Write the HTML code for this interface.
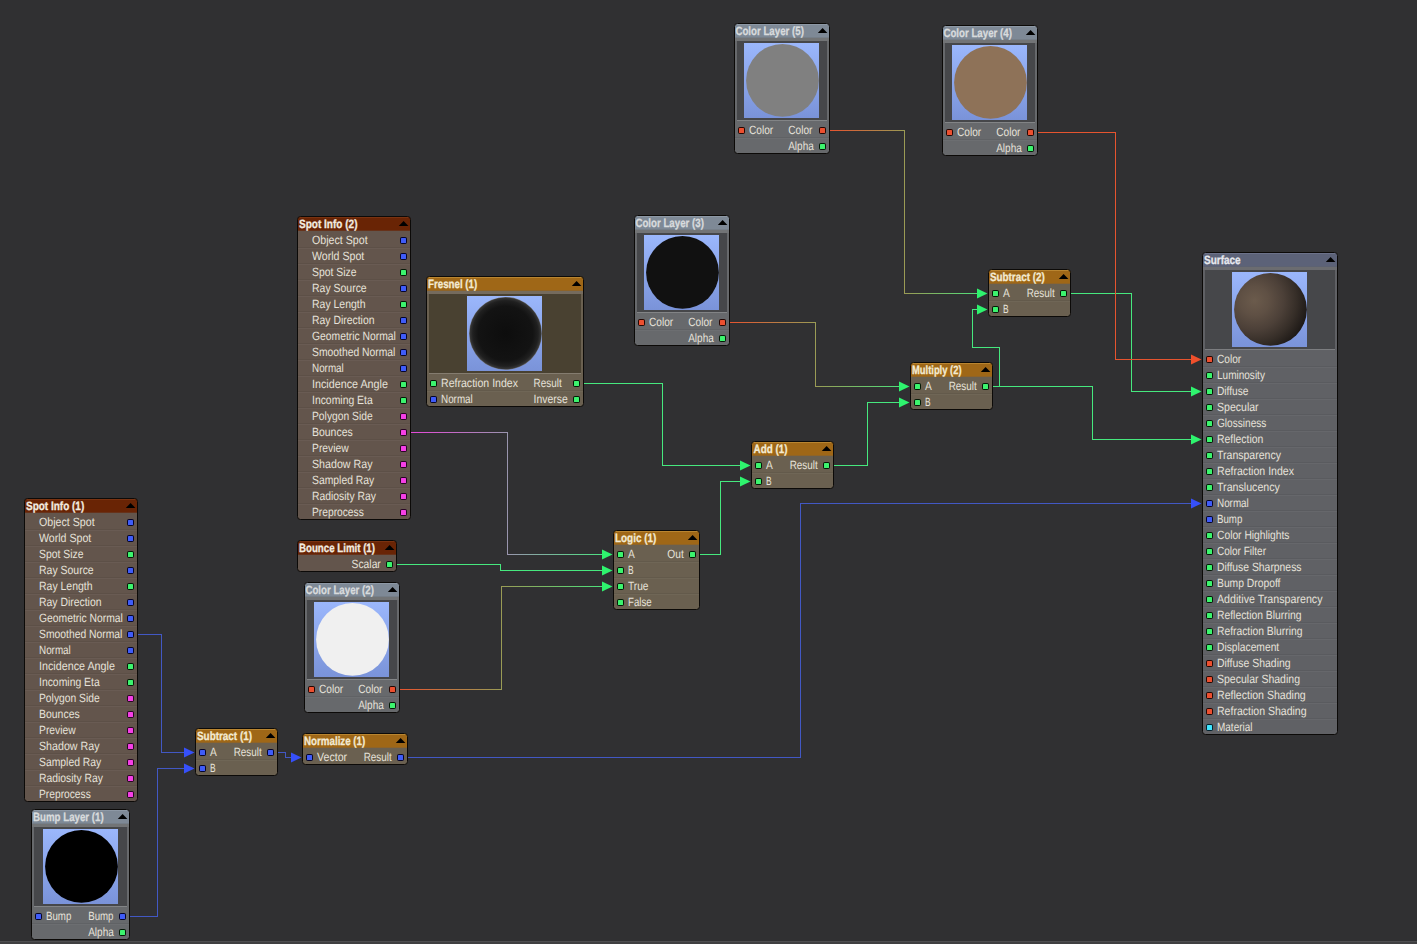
<!DOCTYPE html>
<html lang="en"><head><meta charset="utf-8"><title>Node Editor</title>
<style>
html,body{margin:0;padding:0;background:#303032;overflow:hidden}
body{width:1417px;height:944px;font-family:"Liberation Sans",sans-serif}
svg{display:block}
</style></head><body>
<svg width="1417" height="944" viewBox="0 0 1417 944" font-family="'Liberation Sans', sans-serif" text-rendering="geometricPrecision">
<defs>
<linearGradient id="sky" x1="0" y1="0" x2="0" y2="1"><stop offset="0" stop-color="#9bb7fc"/><stop offset="1" stop-color="#7a93d9"/></linearGradient>
<radialGradient id="gfres" cx="0.5" cy="0.5" r="0.5"><stop offset="0" stop-color="#0d0d0d"/><stop offset="0.75" stop-color="#131313"/><stop offset="0.9" stop-color="#202020"/><stop offset="0.97" stop-color="#343434"/><stop offset="1" stop-color="#686868"/></radialGradient>
<radialGradient id="gsurf" cx="0.28" cy="0.38" r="0.80"><stop offset="0" stop-color="#6b5b4c"/><stop offset="0.25" stop-color="#5f5044"/><stop offset="0.5" stop-color="#4c4038"/><stop offset="0.72" stop-color="#362e28"/><stop offset="0.9" stop-color="#211c19"/><stop offset="1" stop-color="#131110"/></radialGradient>
<linearGradient id="w4" gradientUnits="userSpaceOnUse" x1="411" y1="0" x2="612" y2="0"><stop offset="0" stop-color="#e648da"/><stop offset="1" stop-color="#46e87e"/></linearGradient><linearGradient id="w6" gradientUnits="userSpaceOnUse" x1="400" y1="0" x2="612" y2="0"><stop offset="0" stop-color="#e6542f"/><stop offset="1" stop-color="#46e87e"/></linearGradient><linearGradient id="w10" gradientUnits="userSpaceOnUse" x1="730" y1="0" x2="909" y2="0"><stop offset="0" stop-color="#e6542f"/><stop offset="1" stop-color="#46e87e"/></linearGradient><linearGradient id="w13" gradientUnits="userSpaceOnUse" x1="830" y1="0" x2="987" y2="0"><stop offset="0" stop-color="#e6542f"/><stop offset="1" stop-color="#46e87e"/></linearGradient><clipPath id="cp-spot1"><rect x="24.5" y="498.5" width="113" height="303" rx="3"/></clipPath><clipPath id="cp-spot2"><rect x="297.5" y="216.5" width="113" height="303" rx="3"/></clipPath><clipPath id="cp-bump"><rect x="31.5" y="809.5" width="98" height="130" rx="3"/></clipPath><clipPath id="cp-sub1"><rect x="195.5" y="728.5" width="82" height="47" rx="3"/></clipPath><clipPath id="cp-norm"><rect x="302.5" y="733.5" width="105" height="31" rx="3"/></clipPath><clipPath id="cp-bounce"><rect x="297.5" y="540.5" width="99" height="31" rx="3"/></clipPath><clipPath id="cp-cl2"><rect x="304.5" y="582.5" width="95" height="130" rx="3"/></clipPath><clipPath id="cp-fresnel"><rect x="426.5" y="276.5" width="157" height="130" rx="3"/></clipPath><clipPath id="cp-logic"><rect x="613.5" y="530.5" width="86" height="79" rx="3"/></clipPath><clipPath id="cp-add"><rect x="751.5" y="441.5" width="82" height="47" rx="3"/></clipPath><clipPath id="cp-cl3"><rect x="634.5" y="215.5" width="95" height="130" rx="3"/></clipPath><clipPath id="cp-cl5"><rect x="734.5" y="23.5" width="95" height="130" rx="3"/></clipPath><clipPath id="cp-cl4"><rect x="942.5" y="25.5" width="95" height="130" rx="3"/></clipPath><clipPath id="cp-mult"><rect x="910.5" y="362.5" width="82" height="47" rx="3"/></clipPath><clipPath id="cp-sub2"><rect x="988.5" y="269.5" width="82" height="47" rx="3"/></clipPath><clipPath id="cp-surface"><rect x="1202.5" y="252.5" width="135" height="482" rx="3"/></clipPath>
</defs>
<rect width="1417" height="944" fill="#303032"/>
<rect x="0" y="941" width="1417" height="1" fill="#4e4e50"/>
<rect x="0" y="942" width="1417" height="2" fill="#3f3f41"/>
<path d="M138 634.5L161.5 634.5L161.5 752.5L185 752.5" fill="none" stroke="#4258c4" stroke-width="1" shape-rendering="crispEdges"/>
<path d="M194.5 752.5L184 747.5L184 757.5Z" fill="#3650fa"/>
<path d="M130 916.5L157.5 916.5L157.5 768.5L185 768.5" fill="none" stroke="#4258c4" stroke-width="1" shape-rendering="crispEdges"/>
<path d="M194.5 768.5L184 763.5L184 773.5Z" fill="#3650fa"/>
<path d="M278 752.5L285.5 752.5L285.5 757.5L292 757.5" fill="none" stroke="#4258c4" stroke-width="1" shape-rendering="crispEdges"/>
<path d="M301.5 757.5L291 752.5L291 762.5Z" fill="#3650fa"/>
<path d="M408 757.5L800.5 757.5L800.5 503.5L1192 503.5" fill="none" stroke="#4258c4" stroke-width="1" shape-rendering="crispEdges"/>
<path d="M1201.5 503.5L1191 498.5L1191 508.5Z" fill="#3650fa"/>
<path d="M411 432.5L507.5 432.5L507.5 554.5L603 554.5" fill="none" stroke="url(#w4)" stroke-width="1" shape-rendering="crispEdges"/>
<path d="M612.5 554.5L602 549.5L602 559.5Z" fill="#2ef46e"/>
<path d="M397 564.5L500.5 564.5L500.5 570.5L603 570.5" fill="none" stroke="#46e87e" stroke-width="1" shape-rendering="crispEdges"/>
<path d="M612.5 570.5L602 565.5L602 575.5Z" fill="#2ef46e"/>
<path d="M400 689.5L501.5 689.5L501.5 586.5L603 586.5" fill="none" stroke="url(#w6)" stroke-width="1" shape-rendering="crispEdges"/>
<path d="M612.5 586.5L602 581.5L602 591.5Z" fill="#2ef46e"/>
<path d="M584 383.5L662.5 383.5L662.5 465.5L741 465.5" fill="none" stroke="#46e87e" stroke-width="1" shape-rendering="crispEdges"/>
<path d="M750.5 465.5L740 460.5L740 470.5Z" fill="#2ef46e"/>
<path d="M700 554.5L720.5 554.5L720.5 481.5L741 481.5" fill="none" stroke="#46e87e" stroke-width="1" shape-rendering="crispEdges"/>
<path d="M750.5 481.5L740 476.5L740 486.5Z" fill="#2ef46e"/>
<path d="M834 465.5L867.5 465.5L867.5 402.5L900 402.5" fill="none" stroke="#46e87e" stroke-width="1" shape-rendering="crispEdges"/>
<path d="M909.5 402.5L899 397.5L899 407.5Z" fill="#2ef46e"/>
<path d="M730 322.5L815.5 322.5L815.5 386.5L900 386.5" fill="none" stroke="url(#w10)" stroke-width="1" shape-rendering="crispEdges"/>
<path d="M909.5 386.5L899 381.5L899 391.5Z" fill="#2ef46e"/>
<path d="M993 386.5L1092.5 386.5L1092.5 439.5L1192 439.5" fill="none" stroke="#46e87e" stroke-width="1" shape-rendering="crispEdges"/>
<path d="M1201.5 439.5L1191 434.5L1191 444.5Z" fill="#2ef46e"/>
<path d="M993 386.5L999.5 386.5L999.5 347.5L972.5 347.5L972.5 309.5L978 309.5" fill="none" stroke="#46e87e" stroke-width="1" shape-rendering="crispEdges"/>
<path d="M987.5 309.5L977 304.5L977 314.5Z" fill="#2ef46e"/>
<path d="M830 130.5L904.5 130.5L904.5 293.5L978 293.5" fill="none" stroke="url(#w13)" stroke-width="1" shape-rendering="crispEdges"/>
<path d="M987.5 293.5L977 288.5L977 298.5Z" fill="#2ef46e"/>
<path d="M1071 293.5L1131.5 293.5L1131.5 391.5L1192 391.5" fill="none" stroke="#46e87e" stroke-width="1" shape-rendering="crispEdges"/>
<path d="M1201.5 391.5L1191 386.5L1191 396.5Z" fill="#2ef46e"/>
<path d="M1038 132.5L1115.5 132.5L1115.5 359.5L1192 359.5" fill="none" stroke="#e6542f" stroke-width="1" shape-rendering="crispEdges"/>
<path d="M1201.5 359.5L1191 354.5L1191 364.5Z" fill="#f0502c"/>
<g id="spot1">
<g clip-path="url(#cp-spot1)">
<rect x="24" y="498" width="114" height="304" fill="#63554c"/>
<rect x="24" y="498" width="114" height="14" fill="#692405"/>
<rect x="24" y="499" width="114" height="1" fill="#7a3210"/>
<rect x="24" y="512" width="114" height="1" fill="#692405" fill-opacity="0.7"/>
<rect x="24" y="529" width="114" height="1" fill="#000" fill-opacity="0.06"/>
<rect x="24" y="530" width="114" height="1" fill="#fff" fill-opacity="0.04"/>
<rect x="24" y="545" width="114" height="1" fill="#000" fill-opacity="0.06"/>
<rect x="24" y="546" width="114" height="1" fill="#fff" fill-opacity="0.04"/>
<rect x="24" y="561" width="114" height="1" fill="#000" fill-opacity="0.06"/>
<rect x="24" y="562" width="114" height="1" fill="#fff" fill-opacity="0.04"/>
<rect x="24" y="577" width="114" height="1" fill="#000" fill-opacity="0.06"/>
<rect x="24" y="578" width="114" height="1" fill="#fff" fill-opacity="0.04"/>
<rect x="24" y="593" width="114" height="1" fill="#000" fill-opacity="0.06"/>
<rect x="24" y="594" width="114" height="1" fill="#fff" fill-opacity="0.04"/>
<rect x="24" y="609" width="114" height="1" fill="#000" fill-opacity="0.06"/>
<rect x="24" y="610" width="114" height="1" fill="#fff" fill-opacity="0.04"/>
<rect x="24" y="625" width="114" height="1" fill="#000" fill-opacity="0.06"/>
<rect x="24" y="626" width="114" height="1" fill="#fff" fill-opacity="0.04"/>
<rect x="24" y="641" width="114" height="1" fill="#000" fill-opacity="0.06"/>
<rect x="24" y="642" width="114" height="1" fill="#fff" fill-opacity="0.04"/>
<rect x="24" y="657" width="114" height="1" fill="#000" fill-opacity="0.06"/>
<rect x="24" y="658" width="114" height="1" fill="#fff" fill-opacity="0.04"/>
<rect x="24" y="673" width="114" height="1" fill="#000" fill-opacity="0.06"/>
<rect x="24" y="674" width="114" height="1" fill="#fff" fill-opacity="0.04"/>
<rect x="24" y="689" width="114" height="1" fill="#000" fill-opacity="0.06"/>
<rect x="24" y="690" width="114" height="1" fill="#fff" fill-opacity="0.04"/>
<rect x="24" y="705" width="114" height="1" fill="#000" fill-opacity="0.06"/>
<rect x="24" y="706" width="114" height="1" fill="#fff" fill-opacity="0.04"/>
<rect x="24" y="721" width="114" height="1" fill="#000" fill-opacity="0.06"/>
<rect x="24" y="722" width="114" height="1" fill="#fff" fill-opacity="0.04"/>
<rect x="24" y="737" width="114" height="1" fill="#000" fill-opacity="0.06"/>
<rect x="24" y="738" width="114" height="1" fill="#fff" fill-opacity="0.04"/>
<rect x="24" y="753" width="114" height="1" fill="#000" fill-opacity="0.06"/>
<rect x="24" y="754" width="114" height="1" fill="#fff" fill-opacity="0.04"/>
<rect x="24" y="769" width="114" height="1" fill="#000" fill-opacity="0.06"/>
<rect x="24" y="770" width="114" height="1" fill="#fff" fill-opacity="0.04"/>
<rect x="24" y="785" width="114" height="1" fill="#000" fill-opacity="0.06"/>
<rect x="24" y="786" width="114" height="1" fill="#fff" fill-opacity="0.04"/>
</g>
<rect x="24.5" y="498.5" width="113" height="303" rx="3" fill="none" stroke="#0c0a08"/>
<text x="26.0" y="509.9" font-size="12" font-weight="bold" stroke="#f3ece0" stroke-width="0.3" fill="#f3ece0" textLength="58.2" lengthAdjust="spacingAndGlyphs">Spot Info (1)</text>
<path d="M125.8 508L130.6 502.9L135.4 508Z" fill="#000"/>
<text x="39.0" y="525.7" font-size="12" fill="#e6e2da" textLength="55.6" lengthAdjust="spacingAndGlyphs">Object Spot</text>
<rect x="127" y="519" width="7" height="7" rx="2" fill="#04042c"/><rect x="128" y="520" width="5" height="5" rx="0.6" fill="#3f5cf8"/>
<text x="39.0" y="541.7" font-size="12" fill="#e6e2da" textLength="52.3" lengthAdjust="spacingAndGlyphs">World Spot</text>
<rect x="127" y="535" width="7" height="7" rx="2" fill="#04042c"/><rect x="128" y="536" width="5" height="5" rx="0.6" fill="#3f5cf8"/>
<text x="39.0" y="557.7" font-size="12" fill="#e6e2da" textLength="44.5" lengthAdjust="spacingAndGlyphs">Spot Size</text>
<rect x="127" y="551" width="7" height="7" rx="2" fill="#031a06"/><rect x="128" y="552" width="5" height="5" rx="0.6" fill="#3cf46e"/>
<text x="39.0" y="573.7" font-size="12" fill="#e6e2da" textLength="54.7" lengthAdjust="spacingAndGlyphs">Ray Source</text>
<rect x="127" y="567" width="7" height="7" rx="2" fill="#04042c"/><rect x="128" y="568" width="5" height="5" rx="0.6" fill="#3f5cf8"/>
<text x="39.0" y="589.7" font-size="12" fill="#e6e2da" textLength="53.6" lengthAdjust="spacingAndGlyphs">Ray Length</text>
<rect x="127" y="583" width="7" height="7" rx="2" fill="#031a06"/><rect x="128" y="584" width="5" height="5" rx="0.6" fill="#3cf46e"/>
<text x="39.0" y="605.7" font-size="12" fill="#e6e2da" textLength="62.5" lengthAdjust="spacingAndGlyphs">Ray Direction</text>
<rect x="127" y="599" width="7" height="7" rx="2" fill="#04042c"/><rect x="128" y="600" width="5" height="5" rx="0.6" fill="#3f5cf8"/>
<text x="39.0" y="621.7" font-size="12" fill="#e6e2da" textLength="83.9" lengthAdjust="spacingAndGlyphs">Geometric Normal</text>
<rect x="127" y="615" width="7" height="7" rx="2" fill="#04042c"/><rect x="128" y="616" width="5" height="5" rx="0.6" fill="#3f5cf8"/>
<text x="39.0" y="637.7" font-size="12" fill="#e6e2da" textLength="83.4" lengthAdjust="spacingAndGlyphs">Smoothed Normal</text>
<rect x="127" y="631" width="7" height="7" rx="2" fill="#04042c"/><rect x="128" y="632" width="5" height="5" rx="0.6" fill="#3f5cf8"/>
<text x="39.0" y="653.7" font-size="12" fill="#e6e2da" textLength="31.8" lengthAdjust="spacingAndGlyphs">Normal</text>
<rect x="127" y="647" width="7" height="7" rx="2" fill="#04042c"/><rect x="128" y="648" width="5" height="5" rx="0.6" fill="#3f5cf8"/>
<text x="39.0" y="669.7" font-size="12" fill="#e6e2da" textLength="75.9" lengthAdjust="spacingAndGlyphs">Incidence Angle</text>
<rect x="127" y="663" width="7" height="7" rx="2" fill="#031a06"/><rect x="128" y="664" width="5" height="5" rx="0.6" fill="#3cf46e"/>
<text x="39.0" y="685.7" font-size="12" fill="#e6e2da" textLength="60.7" lengthAdjust="spacingAndGlyphs">Incoming Eta</text>
<rect x="127" y="679" width="7" height="7" rx="2" fill="#031a06"/><rect x="128" y="680" width="5" height="5" rx="0.6" fill="#3cf46e"/>
<text x="39.0" y="701.7" font-size="12" fill="#e6e2da" textLength="60.7" lengthAdjust="spacingAndGlyphs">Polygon Side</text>
<rect x="127" y="695" width="7" height="7" rx="2" fill="#2a0426"/><rect x="128" y="696" width="5" height="5" rx="0.6" fill="#f63fe6"/>
<text x="39.0" y="717.7" font-size="12" fill="#e6e2da" textLength="40.7" lengthAdjust="spacingAndGlyphs">Bounces</text>
<rect x="127" y="711" width="7" height="7" rx="2" fill="#2a0426"/><rect x="128" y="712" width="5" height="5" rx="0.6" fill="#f63fe6"/>
<text x="39.0" y="733.7" font-size="12" fill="#e6e2da" textLength="36.7" lengthAdjust="spacingAndGlyphs">Preview</text>
<rect x="127" y="727" width="7" height="7" rx="2" fill="#2a0426"/><rect x="128" y="728" width="5" height="5" rx="0.6" fill="#f63fe6"/>
<text x="39.0" y="749.7" font-size="12" fill="#e6e2da" textLength="60.5" lengthAdjust="spacingAndGlyphs">Shadow Ray</text>
<rect x="127" y="743" width="7" height="7" rx="2" fill="#2a0426"/><rect x="128" y="744" width="5" height="5" rx="0.6" fill="#f63fe6"/>
<text x="39.0" y="765.7" font-size="12" fill="#e6e2da" textLength="62.3" lengthAdjust="spacingAndGlyphs">Sampled Ray</text>
<rect x="127" y="759" width="7" height="7" rx="2" fill="#2a0426"/><rect x="128" y="760" width="5" height="5" rx="0.6" fill="#f63fe6"/>
<text x="39.0" y="781.7" font-size="12" fill="#e6e2da" textLength="64.0" lengthAdjust="spacingAndGlyphs">Radiosity Ray</text>
<rect x="127" y="775" width="7" height="7" rx="2" fill="#2a0426"/><rect x="128" y="776" width="5" height="5" rx="0.6" fill="#f63fe6"/>
<text x="39.0" y="797.7" font-size="12" fill="#e6e2da" textLength="51.8" lengthAdjust="spacingAndGlyphs">Preprocess</text>
<rect x="127" y="791" width="7" height="7" rx="2" fill="#2a0426"/><rect x="128" y="792" width="5" height="5" rx="0.6" fill="#f63fe6"/>
</g>
<g id="spot2">
<g clip-path="url(#cp-spot2)">
<rect x="297" y="216" width="114" height="304" fill="#63554c"/>
<rect x="297" y="216" width="114" height="14" fill="#692405"/>
<rect x="297" y="217" width="114" height="1" fill="#7a3210"/>
<rect x="297" y="230" width="114" height="1" fill="#692405" fill-opacity="0.7"/>
<rect x="297" y="247" width="114" height="1" fill="#000" fill-opacity="0.06"/>
<rect x="297" y="248" width="114" height="1" fill="#fff" fill-opacity="0.04"/>
<rect x="297" y="263" width="114" height="1" fill="#000" fill-opacity="0.06"/>
<rect x="297" y="264" width="114" height="1" fill="#fff" fill-opacity="0.04"/>
<rect x="297" y="279" width="114" height="1" fill="#000" fill-opacity="0.06"/>
<rect x="297" y="280" width="114" height="1" fill="#fff" fill-opacity="0.04"/>
<rect x="297" y="295" width="114" height="1" fill="#000" fill-opacity="0.06"/>
<rect x="297" y="296" width="114" height="1" fill="#fff" fill-opacity="0.04"/>
<rect x="297" y="311" width="114" height="1" fill="#000" fill-opacity="0.06"/>
<rect x="297" y="312" width="114" height="1" fill="#fff" fill-opacity="0.04"/>
<rect x="297" y="327" width="114" height="1" fill="#000" fill-opacity="0.06"/>
<rect x="297" y="328" width="114" height="1" fill="#fff" fill-opacity="0.04"/>
<rect x="297" y="343" width="114" height="1" fill="#000" fill-opacity="0.06"/>
<rect x="297" y="344" width="114" height="1" fill="#fff" fill-opacity="0.04"/>
<rect x="297" y="359" width="114" height="1" fill="#000" fill-opacity="0.06"/>
<rect x="297" y="360" width="114" height="1" fill="#fff" fill-opacity="0.04"/>
<rect x="297" y="375" width="114" height="1" fill="#000" fill-opacity="0.06"/>
<rect x="297" y="376" width="114" height="1" fill="#fff" fill-opacity="0.04"/>
<rect x="297" y="391" width="114" height="1" fill="#000" fill-opacity="0.06"/>
<rect x="297" y="392" width="114" height="1" fill="#fff" fill-opacity="0.04"/>
<rect x="297" y="407" width="114" height="1" fill="#000" fill-opacity="0.06"/>
<rect x="297" y="408" width="114" height="1" fill="#fff" fill-opacity="0.04"/>
<rect x="297" y="423" width="114" height="1" fill="#000" fill-opacity="0.06"/>
<rect x="297" y="424" width="114" height="1" fill="#fff" fill-opacity="0.04"/>
<rect x="297" y="439" width="114" height="1" fill="#000" fill-opacity="0.06"/>
<rect x="297" y="440" width="114" height="1" fill="#fff" fill-opacity="0.04"/>
<rect x="297" y="455" width="114" height="1" fill="#000" fill-opacity="0.06"/>
<rect x="297" y="456" width="114" height="1" fill="#fff" fill-opacity="0.04"/>
<rect x="297" y="471" width="114" height="1" fill="#000" fill-opacity="0.06"/>
<rect x="297" y="472" width="114" height="1" fill="#fff" fill-opacity="0.04"/>
<rect x="297" y="487" width="114" height="1" fill="#000" fill-opacity="0.06"/>
<rect x="297" y="488" width="114" height="1" fill="#fff" fill-opacity="0.04"/>
<rect x="297" y="503" width="114" height="1" fill="#000" fill-opacity="0.06"/>
<rect x="297" y="504" width="114" height="1" fill="#fff" fill-opacity="0.04"/>
</g>
<rect x="297.5" y="216.5" width="113" height="303" rx="3" fill="none" stroke="#0c0a08"/>
<text x="299.0" y="227.9" font-size="12" font-weight="bold" stroke="#f3ece0" stroke-width="0.3" fill="#f3ece0" textLength="58.5" lengthAdjust="spacingAndGlyphs">Spot Info (2)</text>
<path d="M398.8 226L403.6 220.9L408.4 226Z" fill="#000"/>
<text x="312.0" y="243.7" font-size="12" fill="#e6e2da" textLength="55.6" lengthAdjust="spacingAndGlyphs">Object Spot</text>
<rect x="400" y="237" width="7" height="7" rx="2" fill="#04042c"/><rect x="401" y="238" width="5" height="5" rx="0.6" fill="#3f5cf8"/>
<text x="312.0" y="259.7" font-size="12" fill="#e6e2da" textLength="52.3" lengthAdjust="spacingAndGlyphs">World Spot</text>
<rect x="400" y="253" width="7" height="7" rx="2" fill="#04042c"/><rect x="401" y="254" width="5" height="5" rx="0.6" fill="#3f5cf8"/>
<text x="312.0" y="275.7" font-size="12" fill="#e6e2da" textLength="44.5" lengthAdjust="spacingAndGlyphs">Spot Size</text>
<rect x="400" y="269" width="7" height="7" rx="2" fill="#031a06"/><rect x="401" y="270" width="5" height="5" rx="0.6" fill="#3cf46e"/>
<text x="312.0" y="291.7" font-size="12" fill="#e6e2da" textLength="54.7" lengthAdjust="spacingAndGlyphs">Ray Source</text>
<rect x="400" y="285" width="7" height="7" rx="2" fill="#04042c"/><rect x="401" y="286" width="5" height="5" rx="0.6" fill="#3f5cf8"/>
<text x="312.0" y="307.7" font-size="12" fill="#e6e2da" textLength="53.6" lengthAdjust="spacingAndGlyphs">Ray Length</text>
<rect x="400" y="301" width="7" height="7" rx="2" fill="#031a06"/><rect x="401" y="302" width="5" height="5" rx="0.6" fill="#3cf46e"/>
<text x="312.0" y="323.7" font-size="12" fill="#e6e2da" textLength="62.5" lengthAdjust="spacingAndGlyphs">Ray Direction</text>
<rect x="400" y="317" width="7" height="7" rx="2" fill="#04042c"/><rect x="401" y="318" width="5" height="5" rx="0.6" fill="#3f5cf8"/>
<text x="312.0" y="339.7" font-size="12" fill="#e6e2da" textLength="83.9" lengthAdjust="spacingAndGlyphs">Geometric Normal</text>
<rect x="400" y="333" width="7" height="7" rx="2" fill="#04042c"/><rect x="401" y="334" width="5" height="5" rx="0.6" fill="#3f5cf8"/>
<text x="312.0" y="355.7" font-size="12" fill="#e6e2da" textLength="83.4" lengthAdjust="spacingAndGlyphs">Smoothed Normal</text>
<rect x="400" y="349" width="7" height="7" rx="2" fill="#04042c"/><rect x="401" y="350" width="5" height="5" rx="0.6" fill="#3f5cf8"/>
<text x="312.0" y="371.7" font-size="12" fill="#e6e2da" textLength="31.8" lengthAdjust="spacingAndGlyphs">Normal</text>
<rect x="400" y="365" width="7" height="7" rx="2" fill="#04042c"/><rect x="401" y="366" width="5" height="5" rx="0.6" fill="#3f5cf8"/>
<text x="312.0" y="387.7" font-size="12" fill="#e6e2da" textLength="75.9" lengthAdjust="spacingAndGlyphs">Incidence Angle</text>
<rect x="400" y="381" width="7" height="7" rx="2" fill="#031a06"/><rect x="401" y="382" width="5" height="5" rx="0.6" fill="#3cf46e"/>
<text x="312.0" y="403.7" font-size="12" fill="#e6e2da" textLength="60.7" lengthAdjust="spacingAndGlyphs">Incoming Eta</text>
<rect x="400" y="397" width="7" height="7" rx="2" fill="#031a06"/><rect x="401" y="398" width="5" height="5" rx="0.6" fill="#3cf46e"/>
<text x="312.0" y="419.7" font-size="12" fill="#e6e2da" textLength="60.7" lengthAdjust="spacingAndGlyphs">Polygon Side</text>
<rect x="400" y="413" width="7" height="7" rx="2" fill="#2a0426"/><rect x="401" y="414" width="5" height="5" rx="0.6" fill="#f63fe6"/>
<text x="312.0" y="435.7" font-size="12" fill="#e6e2da" textLength="40.7" lengthAdjust="spacingAndGlyphs">Bounces</text>
<rect x="400" y="429" width="7" height="7" rx="2" fill="#2a0426"/><rect x="401" y="430" width="5" height="5" rx="0.6" fill="#f63fe6"/>
<text x="312.0" y="451.7" font-size="12" fill="#e6e2da" textLength="36.7" lengthAdjust="spacingAndGlyphs">Preview</text>
<rect x="400" y="445" width="7" height="7" rx="2" fill="#2a0426"/><rect x="401" y="446" width="5" height="5" rx="0.6" fill="#f63fe6"/>
<text x="312.0" y="467.7" font-size="12" fill="#e6e2da" textLength="60.5" lengthAdjust="spacingAndGlyphs">Shadow Ray</text>
<rect x="400" y="461" width="7" height="7" rx="2" fill="#2a0426"/><rect x="401" y="462" width="5" height="5" rx="0.6" fill="#f63fe6"/>
<text x="312.0" y="483.7" font-size="12" fill="#e6e2da" textLength="62.3" lengthAdjust="spacingAndGlyphs">Sampled Ray</text>
<rect x="400" y="477" width="7" height="7" rx="2" fill="#2a0426"/><rect x="401" y="478" width="5" height="5" rx="0.6" fill="#f63fe6"/>
<text x="312.0" y="499.7" font-size="12" fill="#e6e2da" textLength="64.0" lengthAdjust="spacingAndGlyphs">Radiosity Ray</text>
<rect x="400" y="493" width="7" height="7" rx="2" fill="#2a0426"/><rect x="401" y="494" width="5" height="5" rx="0.6" fill="#f63fe6"/>
<text x="312.0" y="515.7" font-size="12" fill="#e6e2da" textLength="51.8" lengthAdjust="spacingAndGlyphs">Preprocess</text>
<rect x="400" y="509" width="7" height="7" rx="2" fill="#2a0426"/><rect x="401" y="510" width="5" height="5" rx="0.6" fill="#f63fe6"/>
</g>
<g id="bump">
<g clip-path="url(#cp-bump)">
<rect x="31" y="809" width="99" height="131" fill="#67696c"/>
<rect x="31" y="809" width="99" height="14" fill="#7e8996"/>
<rect x="31" y="810" width="99" height="1" fill="#8d98a5"/>
<rect x="31" y="823" width="99" height="1" fill="#7e8996" fill-opacity="0.7"/>
<rect x="34" y="827" width="93" height="79" fill="#46474a"/>
<rect x="31" y="824" width="99" height="3" fill="#fff" fill-opacity="0.075"/>
<rect x="34" y="906" width="93" height="1" fill="#fff" fill-opacity="0.18"/>
<rect x="43" y="829" width="75" height="75" fill="url(#sky)"/>
<circle cx="81.5" cy="866.4" r="36.4" fill="#000000"/>
<rect x="31" y="923" width="99" height="1" fill="#000" fill-opacity="0.06"/>
<rect x="31" y="924" width="99" height="1" fill="#fff" fill-opacity="0.04"/>
</g>
<rect x="31.5" y="809.5" width="98" height="130" rx="3" fill="none" stroke="#0c0a08"/>
<text x="33.0" y="820.9" font-size="12" font-weight="bold" stroke="#d8dbdd" stroke-width="0.3" fill="#d8dbdd" textLength="70.7" lengthAdjust="spacingAndGlyphs">Bump Layer (1)</text>
<path d="M117.8 819L122.6 813.9L127.4 819Z" fill="#000"/>
<rect x="35" y="913" width="7" height="7" rx="2" fill="#04042c"/><rect x="36" y="914" width="5" height="5" rx="0.6" fill="#3f5cf8"/>
<text x="46.0" y="919.7" font-size="12" fill="#e6e2da" textLength="25.3" lengthAdjust="spacingAndGlyphs">Bump</text>
<rect x="119" y="913" width="7" height="7" rx="2" fill="#04042c"/><rect x="120" y="914" width="5" height="5" rx="0.6" fill="#3f5cf8"/>
<text x="88.2" y="919.7" font-size="12" fill="#e6e2da" textLength="25.3" lengthAdjust="spacingAndGlyphs">Bump</text>
<rect x="119" y="929" width="7" height="7" rx="2" fill="#031a06"/><rect x="120" y="930" width="5" height="5" rx="0.6" fill="#3cf46e"/>
<text x="88.2" y="935.7" font-size="12" fill="#e6e2da" textLength="25.6" lengthAdjust="spacingAndGlyphs">Alpha</text>
</g>
<g id="sub1">
<g clip-path="url(#cp-sub1)">
<rect x="195" y="728" width="83" height="48" fill="#6a6050"/>
<rect x="195" y="728" width="83" height="14" fill="#9f6717"/>
<rect x="195" y="729" width="83" height="1" fill="#b98530"/>
<rect x="195" y="742" width="83" height="1" fill="#9f6717" fill-opacity="0.7"/>
<rect x="195" y="759" width="83" height="1" fill="#000" fill-opacity="0.06"/>
<rect x="195" y="760" width="83" height="1" fill="#fff" fill-opacity="0.04"/>
</g>
<rect x="195.5" y="728.5" width="82" height="47" rx="3" fill="none" stroke="#0c0a08"/>
<text x="197.0" y="739.9" font-size="12" font-weight="bold" stroke="#f3ead2" stroke-width="0.3" fill="#f3ead2" textLength="55.0" lengthAdjust="spacingAndGlyphs">Subtract (1)</text>
<path d="M265.8 738L270.6 732.9L275.4 738Z" fill="#000"/>
<rect x="199" y="749" width="7" height="7" rx="2" fill="#04042c"/><rect x="200" y="750" width="5" height="5" rx="0.6" fill="#3f5cf8"/>
<text x="210.0" y="755.7" font-size="12" fill="#e6e2da" textLength="6.8" lengthAdjust="spacingAndGlyphs">A</text>
<rect x="267" y="749" width="7" height="7" rx="2" fill="#04042c"/><rect x="268" y="750" width="5" height="5" rx="0.6" fill="#3f5cf8"/>
<text x="233.7" y="755.7" font-size="12" fill="#e6e2da" textLength="28.1" lengthAdjust="spacingAndGlyphs">Result</text>
<rect x="199" y="765" width="7" height="7" rx="2" fill="#04042c"/><rect x="200" y="766" width="5" height="5" rx="0.6" fill="#3f5cf8"/>
<text x="210.0" y="771.7" font-size="12" fill="#e6e2da" textLength="5.6" lengthAdjust="spacingAndGlyphs">B</text>
</g>
<g id="norm">
<g clip-path="url(#cp-norm)">
<rect x="302" y="733" width="106" height="32" fill="#6a6050"/>
<rect x="302" y="733" width="106" height="14" fill="#9f6717"/>
<rect x="302" y="734" width="106" height="1" fill="#b98530"/>
<rect x="302" y="747" width="106" height="1" fill="#9f6717" fill-opacity="0.7"/>
</g>
<rect x="302.5" y="733.5" width="105" height="31" rx="3" fill="none" stroke="#0c0a08"/>
<text x="304.0" y="744.9" font-size="12" font-weight="bold" stroke="#f3ead2" stroke-width="0.3" fill="#f3ead2" textLength="61.3" lengthAdjust="spacingAndGlyphs">Normalize (1)</text>
<path d="M395.8 743L400.6 737.9L405.4 743Z" fill="#000"/>
<rect x="306" y="754" width="7" height="7" rx="2" fill="#04042c"/><rect x="307" y="755" width="5" height="5" rx="0.6" fill="#3f5cf8"/>
<text x="317.0" y="760.7" font-size="12" fill="#e6e2da" textLength="30.1" lengthAdjust="spacingAndGlyphs">Vector</text>
<rect x="397" y="754" width="7" height="7" rx="2" fill="#04042c"/><rect x="398" y="755" width="5" height="5" rx="0.6" fill="#3f5cf8"/>
<text x="363.7" y="760.7" font-size="12" fill="#e6e2da" textLength="28.1" lengthAdjust="spacingAndGlyphs">Result</text>
</g>
<g id="bounce">
<g clip-path="url(#cp-bounce)">
<rect x="297" y="540" width="100" height="32" fill="#63554c"/>
<rect x="297" y="540" width="100" height="14" fill="#692405"/>
<rect x="297" y="541" width="100" height="1" fill="#7a3210"/>
<rect x="297" y="554" width="100" height="1" fill="#692405" fill-opacity="0.7"/>
</g>
<rect x="297.5" y="540.5" width="99" height="31" rx="3" fill="none" stroke="#0c0a08"/>
<text x="299.0" y="551.9" font-size="12" font-weight="bold" stroke="#f3ece0" stroke-width="0.3" fill="#f3ece0" textLength="76.0" lengthAdjust="spacingAndGlyphs">Bounce Limit (1)</text>
<path d="M384.8 550L389.6 544.9L394.4 550Z" fill="#000"/>
<rect x="386" y="561" width="7" height="7" rx="2" fill="#031a06"/><rect x="387" y="562" width="5" height="5" rx="0.6" fill="#3cf46e"/>
<text x="351.6" y="567.7" font-size="12" fill="#e6e2da" textLength="29.2" lengthAdjust="spacingAndGlyphs">Scalar</text>
</g>
<g id="cl2">
<g clip-path="url(#cp-cl2)">
<rect x="304" y="582" width="96" height="131" fill="#67696c"/>
<rect x="304" y="582" width="96" height="14" fill="#7e8996"/>
<rect x="304" y="583" width="96" height="1" fill="#8d98a5"/>
<rect x="304" y="596" width="96" height="1" fill="#7e8996" fill-opacity="0.7"/>
<rect x="307" y="600" width="90" height="79" fill="#46474a"/>
<rect x="304" y="597" width="96" height="3" fill="#fff" fill-opacity="0.075"/>
<rect x="307" y="679" width="90" height="1" fill="#fff" fill-opacity="0.18"/>
<rect x="314" y="602" width="75" height="75" fill="url(#sky)"/>
<circle cx="352.5" cy="639.4" r="36.4" fill="#f0f0f0"/>
<rect x="304" y="696" width="96" height="1" fill="#000" fill-opacity="0.06"/>
<rect x="304" y="697" width="96" height="1" fill="#fff" fill-opacity="0.04"/>
</g>
<rect x="304.5" y="582.5" width="95" height="130" rx="3" fill="none" stroke="#0c0a08"/>
<text x="305.4" y="593.9" font-size="12" font-weight="bold" stroke="#d8dbdd" stroke-width="0.3" fill="#d8dbdd" textLength="68.5" lengthAdjust="spacingAndGlyphs">Color Layer (2)</text>
<path d="M387.8 592L392.6 586.9L397.4 592Z" fill="#000"/>
<rect x="308" y="686" width="7" height="7" rx="2" fill="#260602"/><rect x="309" y="687" width="5" height="5" rx="0.6" fill="#ec5030"/>
<text x="319.0" y="692.7" font-size="12" fill="#e6e2da" textLength="24.2" lengthAdjust="spacingAndGlyphs">Color</text>
<rect x="389" y="686" width="7" height="7" rx="2" fill="#260602"/><rect x="390" y="687" width="5" height="5" rx="0.6" fill="#ec5030"/>
<text x="358.2" y="692.7" font-size="12" fill="#e6e2da" textLength="24.2" lengthAdjust="spacingAndGlyphs">Color</text>
<rect x="389" y="702" width="7" height="7" rx="2" fill="#031a06"/><rect x="390" y="703" width="5" height="5" rx="0.6" fill="#3cf46e"/>
<text x="358.2" y="708.7" font-size="12" fill="#e6e2da" textLength="25.6" lengthAdjust="spacingAndGlyphs">Alpha</text>
</g>
<g id="fresnel">
<g clip-path="url(#cp-fresnel)">
<rect x="426" y="276" width="158" height="131" fill="#6a6050"/>
<rect x="426" y="276" width="158" height="14" fill="#9f6717"/>
<rect x="426" y="277" width="158" height="1" fill="#b98530"/>
<rect x="426" y="290" width="158" height="1" fill="#9f6717" fill-opacity="0.7"/>
<rect x="429" y="294" width="152" height="79" fill="#494131"/>
<rect x="426" y="291" width="158" height="3" fill="#fff" fill-opacity="0.075"/>
<rect x="429" y="373" width="152" height="1" fill="#fff" fill-opacity="0.18"/>
<rect x="467" y="296" width="75" height="75" fill="url(#sky)"/>
<circle cx="505.5" cy="333.4" r="36.4" fill="url(#gfres)"/>
<rect x="426" y="390" width="158" height="1" fill="#000" fill-opacity="0.06"/>
<rect x="426" y="391" width="158" height="1" fill="#fff" fill-opacity="0.04"/>
</g>
<rect x="426.5" y="276.5" width="157" height="130" rx="3" fill="none" stroke="#0c0a08"/>
<text x="428.0" y="287.9" font-size="12" font-weight="bold" stroke="#f3ead2" stroke-width="0.3" fill="#f3ead2" textLength="49.2" lengthAdjust="spacingAndGlyphs">Fresnel (1)</text>
<path d="M571.8 286L576.6 280.9L581.4 286Z" fill="#000"/>
<rect x="430" y="380" width="7" height="7" rx="2" fill="#031a06"/><rect x="431" y="381" width="5" height="5" rx="0.6" fill="#3cf46e"/>
<text x="441.0" y="386.7" font-size="12" fill="#e6e2da" textLength="77.0" lengthAdjust="spacingAndGlyphs">Refraction Index</text>
<rect x="573" y="380" width="7" height="7" rx="2" fill="#031a06"/><rect x="574" y="381" width="5" height="5" rx="0.6" fill="#3cf46e"/>
<text x="533.6" y="386.7" font-size="12" fill="#e6e2da" textLength="28.1" lengthAdjust="spacingAndGlyphs">Result</text>
<rect x="430" y="396" width="7" height="7" rx="2" fill="#04042c"/><rect x="431" y="397" width="5" height="5" rx="0.6" fill="#3f5cf8"/>
<text x="441.0" y="402.7" font-size="12" fill="#e6e2da" textLength="31.8" lengthAdjust="spacingAndGlyphs">Normal</text>
<rect x="573" y="396" width="7" height="7" rx="2" fill="#031a06"/><rect x="574" y="397" width="5" height="5" rx="0.6" fill="#3cf46e"/>
<text x="533.6" y="402.7" font-size="12" fill="#e6e2da" textLength="34.2" lengthAdjust="spacingAndGlyphs">Inverse</text>
</g>
<g id="logic">
<g clip-path="url(#cp-logic)">
<rect x="613" y="530" width="87" height="80" fill="#6a6050"/>
<rect x="613" y="530" width="87" height="14" fill="#9f6717"/>
<rect x="613" y="531" width="87" height="1" fill="#b98530"/>
<rect x="613" y="544" width="87" height="1" fill="#9f6717" fill-opacity="0.7"/>
<rect x="613" y="561" width="87" height="1" fill="#000" fill-opacity="0.06"/>
<rect x="613" y="562" width="87" height="1" fill="#fff" fill-opacity="0.04"/>
<rect x="613" y="577" width="87" height="1" fill="#000" fill-opacity="0.06"/>
<rect x="613" y="578" width="87" height="1" fill="#fff" fill-opacity="0.04"/>
<rect x="613" y="593" width="87" height="1" fill="#000" fill-opacity="0.06"/>
<rect x="613" y="594" width="87" height="1" fill="#fff" fill-opacity="0.04"/>
</g>
<rect x="613.5" y="530.5" width="86" height="79" rx="3" fill="none" stroke="#0c0a08"/>
<text x="615.0" y="541.9" font-size="12" font-weight="bold" stroke="#f3ead2" stroke-width="0.3" fill="#f3ead2" textLength="41.3" lengthAdjust="spacingAndGlyphs">Logic (1)</text>
<path d="M687.8 540L692.6 534.9L697.4 540Z" fill="#000"/>
<rect x="617" y="551" width="7" height="7" rx="2" fill="#031a06"/><rect x="618" y="552" width="5" height="5" rx="0.6" fill="#3cf46e"/>
<text x="628.0" y="557.7" font-size="12" fill="#e6e2da" textLength="6.8" lengthAdjust="spacingAndGlyphs">A</text>
<rect x="689" y="551" width="7" height="7" rx="2" fill="#031a06"/><rect x="690" y="552" width="5" height="5" rx="0.6" fill="#3cf46e"/>
<text x="667.3" y="557.7" font-size="12" fill="#e6e2da" textLength="16.5" lengthAdjust="spacingAndGlyphs">Out</text>
<rect x="617" y="567" width="7" height="7" rx="2" fill="#031a06"/><rect x="618" y="568" width="5" height="5" rx="0.6" fill="#3cf46e"/>
<text x="628.0" y="573.7" font-size="12" fill="#e6e2da" textLength="5.6" lengthAdjust="spacingAndGlyphs">B</text>
<rect x="617" y="583" width="7" height="7" rx="2" fill="#031a06"/><rect x="618" y="584" width="5" height="5" rx="0.6" fill="#3cf46e"/>
<text x="628.0" y="589.7" font-size="12" fill="#e6e2da" textLength="20.5" lengthAdjust="spacingAndGlyphs">True</text>
<rect x="617" y="599" width="7" height="7" rx="2" fill="#031a06"/><rect x="618" y="600" width="5" height="5" rx="0.6" fill="#3cf46e"/>
<text x="628.0" y="605.7" font-size="12" fill="#e6e2da" textLength="23.7" lengthAdjust="spacingAndGlyphs">False</text>
</g>
<g id="add">
<g clip-path="url(#cp-add)">
<rect x="751" y="441" width="83" height="48" fill="#6a6050"/>
<rect x="751" y="441" width="83" height="14" fill="#9f6717"/>
<rect x="751" y="442" width="83" height="1" fill="#b98530"/>
<rect x="751" y="455" width="83" height="1" fill="#9f6717" fill-opacity="0.7"/>
<rect x="751" y="472" width="83" height="1" fill="#000" fill-opacity="0.06"/>
<rect x="751" y="473" width="83" height="1" fill="#fff" fill-opacity="0.04"/>
</g>
<rect x="751.5" y="441.5" width="82" height="47" rx="3" fill="none" stroke="#0c0a08"/>
<text x="753.6" y="452.9" font-size="12" font-weight="bold" stroke="#f3ead2" stroke-width="0.3" fill="#f3ead2" textLength="33.9" lengthAdjust="spacingAndGlyphs">Add (1)</text>
<path d="M821.8 451L826.6 445.9L831.4 451Z" fill="#000"/>
<rect x="755" y="462" width="7" height="7" rx="2" fill="#031a06"/><rect x="756" y="463" width="5" height="5" rx="0.6" fill="#3cf46e"/>
<text x="766.0" y="468.7" font-size="12" fill="#e6e2da" textLength="6.8" lengthAdjust="spacingAndGlyphs">A</text>
<rect x="823" y="462" width="7" height="7" rx="2" fill="#031a06"/><rect x="824" y="463" width="5" height="5" rx="0.6" fill="#3cf46e"/>
<text x="789.7" y="468.7" font-size="12" fill="#e6e2da" textLength="28.1" lengthAdjust="spacingAndGlyphs">Result</text>
<rect x="755" y="478" width="7" height="7" rx="2" fill="#031a06"/><rect x="756" y="479" width="5" height="5" rx="0.6" fill="#3cf46e"/>
<text x="766.0" y="484.7" font-size="12" fill="#e6e2da" textLength="5.6" lengthAdjust="spacingAndGlyphs">B</text>
</g>
<g id="cl3">
<g clip-path="url(#cp-cl3)">
<rect x="634" y="215" width="96" height="131" fill="#67696c"/>
<rect x="634" y="215" width="96" height="14" fill="#7e8996"/>
<rect x="634" y="216" width="96" height="1" fill="#8d98a5"/>
<rect x="634" y="229" width="96" height="1" fill="#7e8996" fill-opacity="0.7"/>
<rect x="637" y="233" width="90" height="79" fill="#46474a"/>
<rect x="634" y="230" width="96" height="3" fill="#fff" fill-opacity="0.075"/>
<rect x="637" y="312" width="90" height="1" fill="#fff" fill-opacity="0.18"/>
<rect x="644" y="235" width="75" height="75" fill="url(#sky)"/>
<circle cx="682.5" cy="272.4" r="36.4" fill="#111111"/>
<rect x="634" y="329" width="96" height="1" fill="#000" fill-opacity="0.06"/>
<rect x="634" y="330" width="96" height="1" fill="#fff" fill-opacity="0.04"/>
</g>
<rect x="634.5" y="215.5" width="95" height="130" rx="3" fill="none" stroke="#0c0a08"/>
<text x="635.4" y="226.9" font-size="12" font-weight="bold" stroke="#d8dbdd" stroke-width="0.3" fill="#d8dbdd" textLength="68.5" lengthAdjust="spacingAndGlyphs">Color Layer (3)</text>
<path d="M717.8 225L722.6 219.9L727.4 225Z" fill="#000"/>
<rect x="638" y="319" width="7" height="7" rx="2" fill="#260602"/><rect x="639" y="320" width="5" height="5" rx="0.6" fill="#ec5030"/>
<text x="649.0" y="325.7" font-size="12" fill="#e6e2da" textLength="24.2" lengthAdjust="spacingAndGlyphs">Color</text>
<rect x="719" y="319" width="7" height="7" rx="2" fill="#260602"/><rect x="720" y="320" width="5" height="5" rx="0.6" fill="#ec5030"/>
<text x="688.2" y="325.7" font-size="12" fill="#e6e2da" textLength="24.2" lengthAdjust="spacingAndGlyphs">Color</text>
<rect x="719" y="335" width="7" height="7" rx="2" fill="#031a06"/><rect x="720" y="336" width="5" height="5" rx="0.6" fill="#3cf46e"/>
<text x="688.2" y="341.7" font-size="12" fill="#e6e2da" textLength="25.6" lengthAdjust="spacingAndGlyphs">Alpha</text>
</g>
<g id="cl5">
<g clip-path="url(#cp-cl5)">
<rect x="734" y="23" width="96" height="131" fill="#67696c"/>
<rect x="734" y="23" width="96" height="14" fill="#7e8996"/>
<rect x="734" y="24" width="96" height="1" fill="#8d98a5"/>
<rect x="734" y="37" width="96" height="1" fill="#7e8996" fill-opacity="0.7"/>
<rect x="737" y="41" width="90" height="79" fill="#46474a"/>
<rect x="734" y="38" width="96" height="3" fill="#fff" fill-opacity="0.075"/>
<rect x="737" y="120" width="90" height="1" fill="#fff" fill-opacity="0.18"/>
<rect x="744" y="43" width="75" height="75" fill="url(#sky)"/>
<circle cx="782.5" cy="80.4" r="36.4" fill="#808080"/>
<rect x="734" y="137" width="96" height="1" fill="#000" fill-opacity="0.06"/>
<rect x="734" y="138" width="96" height="1" fill="#fff" fill-opacity="0.04"/>
</g>
<rect x="734.5" y="23.5" width="95" height="130" rx="3" fill="none" stroke="#0c0a08"/>
<text x="735.4" y="34.9" font-size="12" font-weight="bold" stroke="#d8dbdd" stroke-width="0.3" fill="#d8dbdd" textLength="68.5" lengthAdjust="spacingAndGlyphs">Color Layer (5)</text>
<path d="M817.8 33L822.6 27.9L827.4 33Z" fill="#000"/>
<rect x="738" y="127" width="7" height="7" rx="2" fill="#260602"/><rect x="739" y="128" width="5" height="5" rx="0.6" fill="#ec5030"/>
<text x="749.0" y="133.7" font-size="12" fill="#e6e2da" textLength="24.2" lengthAdjust="spacingAndGlyphs">Color</text>
<rect x="819" y="127" width="7" height="7" rx="2" fill="#260602"/><rect x="820" y="128" width="5" height="5" rx="0.6" fill="#ec5030"/>
<text x="788.2" y="133.7" font-size="12" fill="#e6e2da" textLength="24.2" lengthAdjust="spacingAndGlyphs">Color</text>
<rect x="819" y="143" width="7" height="7" rx="2" fill="#031a06"/><rect x="820" y="144" width="5" height="5" rx="0.6" fill="#3cf46e"/>
<text x="788.2" y="149.7" font-size="12" fill="#e6e2da" textLength="25.6" lengthAdjust="spacingAndGlyphs">Alpha</text>
</g>
<g id="cl4">
<g clip-path="url(#cp-cl4)">
<rect x="942" y="25" width="96" height="131" fill="#67696c"/>
<rect x="942" y="25" width="96" height="14" fill="#7e8996"/>
<rect x="942" y="26" width="96" height="1" fill="#8d98a5"/>
<rect x="942" y="39" width="96" height="1" fill="#7e8996" fill-opacity="0.7"/>
<rect x="945" y="43" width="90" height="79" fill="#46474a"/>
<rect x="942" y="40" width="96" height="3" fill="#fff" fill-opacity="0.075"/>
<rect x="945" y="122" width="90" height="1" fill="#fff" fill-opacity="0.18"/>
<rect x="952" y="45" width="75" height="75" fill="url(#sky)"/>
<circle cx="990.5" cy="82.4" r="36.4" fill="#8e7258"/>
<rect x="942" y="139" width="96" height="1" fill="#000" fill-opacity="0.06"/>
<rect x="942" y="140" width="96" height="1" fill="#fff" fill-opacity="0.04"/>
</g>
<rect x="942.5" y="25.5" width="95" height="130" rx="3" fill="none" stroke="#0c0a08"/>
<text x="943.4" y="36.9" font-size="12" font-weight="bold" stroke="#d8dbdd" stroke-width="0.3" fill="#d8dbdd" textLength="68.5" lengthAdjust="spacingAndGlyphs">Color Layer (4)</text>
<path d="M1025.8 35L1030.6 29.9L1035.4 35Z" fill="#000"/>
<rect x="946" y="129" width="7" height="7" rx="2" fill="#260602"/><rect x="947" y="130" width="5" height="5" rx="0.6" fill="#ec5030"/>
<text x="957.0" y="135.7" font-size="12" fill="#e6e2da" textLength="24.2" lengthAdjust="spacingAndGlyphs">Color</text>
<rect x="1027" y="129" width="7" height="7" rx="2" fill="#260602"/><rect x="1028" y="130" width="5" height="5" rx="0.6" fill="#ec5030"/>
<text x="996.2" y="135.7" font-size="12" fill="#e6e2da" textLength="24.2" lengthAdjust="spacingAndGlyphs">Color</text>
<rect x="1027" y="145" width="7" height="7" rx="2" fill="#031a06"/><rect x="1028" y="146" width="5" height="5" rx="0.6" fill="#3cf46e"/>
<text x="996.2" y="151.7" font-size="12" fill="#e6e2da" textLength="25.6" lengthAdjust="spacingAndGlyphs">Alpha</text>
</g>
<g id="mult">
<g clip-path="url(#cp-mult)">
<rect x="910" y="362" width="83" height="48" fill="#6a6050"/>
<rect x="910" y="362" width="83" height="14" fill="#9f6717"/>
<rect x="910" y="363" width="83" height="1" fill="#b98530"/>
<rect x="910" y="376" width="83" height="1" fill="#9f6717" fill-opacity="0.7"/>
<rect x="910" y="393" width="83" height="1" fill="#000" fill-opacity="0.06"/>
<rect x="910" y="394" width="83" height="1" fill="#fff" fill-opacity="0.04"/>
</g>
<rect x="910.5" y="362.5" width="82" height="47" rx="3" fill="none" stroke="#0c0a08"/>
<text x="912.0" y="373.9" font-size="12" font-weight="bold" stroke="#f3ead2" stroke-width="0.3" fill="#f3ead2" textLength="49.5" lengthAdjust="spacingAndGlyphs">Multiply (2)</text>
<path d="M980.8 372L985.6 366.9L990.4 372Z" fill="#000"/>
<rect x="914" y="383" width="7" height="7" rx="2" fill="#031a06"/><rect x="915" y="384" width="5" height="5" rx="0.6" fill="#3cf46e"/>
<text x="925.0" y="389.7" font-size="12" fill="#e6e2da" textLength="6.8" lengthAdjust="spacingAndGlyphs">A</text>
<rect x="982" y="383" width="7" height="7" rx="2" fill="#031a06"/><rect x="983" y="384" width="5" height="5" rx="0.6" fill="#3cf46e"/>
<text x="948.7" y="389.7" font-size="12" fill="#e6e2da" textLength="28.1" lengthAdjust="spacingAndGlyphs">Result</text>
<rect x="914" y="399" width="7" height="7" rx="2" fill="#031a06"/><rect x="915" y="400" width="5" height="5" rx="0.6" fill="#3cf46e"/>
<text x="925.0" y="405.7" font-size="12" fill="#e6e2da" textLength="5.6" lengthAdjust="spacingAndGlyphs">B</text>
</g>
<g id="sub2">
<g clip-path="url(#cp-sub2)">
<rect x="988" y="269" width="83" height="48" fill="#6a6050"/>
<rect x="988" y="269" width="83" height="14" fill="#9f6717"/>
<rect x="988" y="270" width="83" height="1" fill="#b98530"/>
<rect x="988" y="283" width="83" height="1" fill="#9f6717" fill-opacity="0.7"/>
<rect x="988" y="300" width="83" height="1" fill="#000" fill-opacity="0.06"/>
<rect x="988" y="301" width="83" height="1" fill="#fff" fill-opacity="0.04"/>
</g>
<rect x="988.5" y="269.5" width="82" height="47" rx="3" fill="none" stroke="#0c0a08"/>
<text x="990.0" y="280.9" font-size="12" font-weight="bold" stroke="#f3ead2" stroke-width="0.3" fill="#f3ead2" textLength="54.7" lengthAdjust="spacingAndGlyphs">Subtract (2)</text>
<path d="M1058.8 279L1063.6 273.9L1068.4 279Z" fill="#000"/>
<rect x="992" y="290" width="7" height="7" rx="2" fill="#031a06"/><rect x="993" y="291" width="5" height="5" rx="0.6" fill="#3cf46e"/>
<text x="1003.0" y="296.7" font-size="12" fill="#e6e2da" textLength="6.8" lengthAdjust="spacingAndGlyphs">A</text>
<rect x="1060" y="290" width="7" height="7" rx="2" fill="#031a06"/><rect x="1061" y="291" width="5" height="5" rx="0.6" fill="#3cf46e"/>
<text x="1026.7" y="296.7" font-size="12" fill="#e6e2da" textLength="28.1" lengthAdjust="spacingAndGlyphs">Result</text>
<rect x="992" y="306" width="7" height="7" rx="2" fill="#031a06"/><rect x="993" y="307" width="5" height="5" rx="0.6" fill="#3cf46e"/>
<text x="1003.0" y="312.7" font-size="12" fill="#e6e2da" textLength="5.6" lengthAdjust="spacingAndGlyphs">B</text>
</g>
<g id="surface">
<g clip-path="url(#cp-surface)">
<rect x="1202" y="252" width="136" height="483" fill="#606165"/>
<rect x="1202" y="252" width="136" height="14" fill="#5c6278"/>
<rect x="1202" y="253" width="136" height="1" fill="#6c728a"/>
<rect x="1202" y="266" width="136" height="1" fill="#5c6278" fill-opacity="0.7"/>
<rect x="1205" y="270" width="130" height="79" fill="#46474a"/>
<rect x="1202" y="267" width="136" height="3" fill="#fff" fill-opacity="0.075"/>
<rect x="1205" y="349" width="130" height="1" fill="#fff" fill-opacity="0.18"/>
<rect x="1232" y="272" width="75" height="75" fill="url(#sky)"/>
<circle cx="1270.5" cy="309.4" r="36.4" fill="url(#gsurf)"/>
<rect x="1202" y="366" width="136" height="1" fill="#000" fill-opacity="0.06"/>
<rect x="1202" y="367" width="136" height="1" fill="#fff" fill-opacity="0.04"/>
<rect x="1202" y="382" width="136" height="1" fill="#000" fill-opacity="0.06"/>
<rect x="1202" y="383" width="136" height="1" fill="#fff" fill-opacity="0.04"/>
<rect x="1202" y="398" width="136" height="1" fill="#000" fill-opacity="0.06"/>
<rect x="1202" y="399" width="136" height="1" fill="#fff" fill-opacity="0.04"/>
<rect x="1202" y="414" width="136" height="1" fill="#000" fill-opacity="0.06"/>
<rect x="1202" y="415" width="136" height="1" fill="#fff" fill-opacity="0.04"/>
<rect x="1202" y="430" width="136" height="1" fill="#000" fill-opacity="0.06"/>
<rect x="1202" y="431" width="136" height="1" fill="#fff" fill-opacity="0.04"/>
<rect x="1202" y="446" width="136" height="1" fill="#000" fill-opacity="0.06"/>
<rect x="1202" y="447" width="136" height="1" fill="#fff" fill-opacity="0.04"/>
<rect x="1202" y="462" width="136" height="1" fill="#000" fill-opacity="0.06"/>
<rect x="1202" y="463" width="136" height="1" fill="#fff" fill-opacity="0.04"/>
<rect x="1202" y="478" width="136" height="1" fill="#000" fill-opacity="0.06"/>
<rect x="1202" y="479" width="136" height="1" fill="#fff" fill-opacity="0.04"/>
<rect x="1202" y="494" width="136" height="1" fill="#000" fill-opacity="0.06"/>
<rect x="1202" y="495" width="136" height="1" fill="#fff" fill-opacity="0.04"/>
<rect x="1202" y="510" width="136" height="1" fill="#000" fill-opacity="0.06"/>
<rect x="1202" y="511" width="136" height="1" fill="#fff" fill-opacity="0.04"/>
<rect x="1202" y="526" width="136" height="1" fill="#000" fill-opacity="0.06"/>
<rect x="1202" y="527" width="136" height="1" fill="#fff" fill-opacity="0.04"/>
<rect x="1202" y="542" width="136" height="1" fill="#000" fill-opacity="0.06"/>
<rect x="1202" y="543" width="136" height="1" fill="#fff" fill-opacity="0.04"/>
<rect x="1202" y="558" width="136" height="1" fill="#000" fill-opacity="0.06"/>
<rect x="1202" y="559" width="136" height="1" fill="#fff" fill-opacity="0.04"/>
<rect x="1202" y="574" width="136" height="1" fill="#000" fill-opacity="0.06"/>
<rect x="1202" y="575" width="136" height="1" fill="#fff" fill-opacity="0.04"/>
<rect x="1202" y="590" width="136" height="1" fill="#000" fill-opacity="0.06"/>
<rect x="1202" y="591" width="136" height="1" fill="#fff" fill-opacity="0.04"/>
<rect x="1202" y="606" width="136" height="1" fill="#000" fill-opacity="0.06"/>
<rect x="1202" y="607" width="136" height="1" fill="#fff" fill-opacity="0.04"/>
<rect x="1202" y="622" width="136" height="1" fill="#000" fill-opacity="0.06"/>
<rect x="1202" y="623" width="136" height="1" fill="#fff" fill-opacity="0.04"/>
<rect x="1202" y="638" width="136" height="1" fill="#000" fill-opacity="0.06"/>
<rect x="1202" y="639" width="136" height="1" fill="#fff" fill-opacity="0.04"/>
<rect x="1202" y="654" width="136" height="1" fill="#000" fill-opacity="0.06"/>
<rect x="1202" y="655" width="136" height="1" fill="#fff" fill-opacity="0.04"/>
<rect x="1202" y="670" width="136" height="1" fill="#000" fill-opacity="0.06"/>
<rect x="1202" y="671" width="136" height="1" fill="#fff" fill-opacity="0.04"/>
<rect x="1202" y="686" width="136" height="1" fill="#000" fill-opacity="0.06"/>
<rect x="1202" y="687" width="136" height="1" fill="#fff" fill-opacity="0.04"/>
<rect x="1202" y="702" width="136" height="1" fill="#000" fill-opacity="0.06"/>
<rect x="1202" y="703" width="136" height="1" fill="#fff" fill-opacity="0.04"/>
<rect x="1202" y="718" width="136" height="1" fill="#000" fill-opacity="0.06"/>
<rect x="1202" y="719" width="136" height="1" fill="#fff" fill-opacity="0.04"/>
</g>
<rect x="1202.5" y="252.5" width="135" height="482" rx="3" fill="none" stroke="#0c0a08"/>
<text x="1204.0" y="263.9" font-size="12" font-weight="bold" stroke="#e6e8ee" stroke-width="0.3" fill="#e6e8ee" textLength="36.6" lengthAdjust="spacingAndGlyphs">Surface</text>
<path d="M1325.8 262L1330.6 256.9L1335.4 262Z" fill="#000"/>
<rect x="1206" y="356" width="7" height="7" rx="2" fill="#260602"/><rect x="1207" y="357" width="5" height="5" rx="0.6" fill="#ec5030"/>
<text x="1217.0" y="362.7" font-size="12" fill="#e6e2da" textLength="24.2" lengthAdjust="spacingAndGlyphs">Color</text>
<rect x="1206" y="372" width="7" height="7" rx="2" fill="#031a06"/><rect x="1207" y="373" width="5" height="5" rx="0.6" fill="#3cf46e"/>
<text x="1217.0" y="378.7" font-size="12" fill="#e6e2da" textLength="47.9" lengthAdjust="spacingAndGlyphs">Luminosity</text>
<rect x="1206" y="388" width="7" height="7" rx="2" fill="#031a06"/><rect x="1207" y="389" width="5" height="5" rx="0.6" fill="#3cf46e"/>
<text x="1217.0" y="394.7" font-size="12" fill="#e6e2da" textLength="31.5" lengthAdjust="spacingAndGlyphs">Diffuse</text>
<rect x="1206" y="404" width="7" height="7" rx="2" fill="#031a06"/><rect x="1207" y="405" width="5" height="5" rx="0.6" fill="#3cf46e"/>
<text x="1217.0" y="410.7" font-size="12" fill="#e6e2da" textLength="41.6" lengthAdjust="spacingAndGlyphs">Specular</text>
<rect x="1206" y="420" width="7" height="7" rx="2" fill="#031a06"/><rect x="1207" y="421" width="5" height="5" rx="0.6" fill="#3cf46e"/>
<text x="1217.0" y="426.7" font-size="12" fill="#e6e2da" textLength="49.4" lengthAdjust="spacingAndGlyphs">Glossiness</text>
<rect x="1206" y="436" width="7" height="7" rx="2" fill="#031a06"/><rect x="1207" y="437" width="5" height="5" rx="0.6" fill="#3cf46e"/>
<text x="1217.0" y="442.7" font-size="12" fill="#e6e2da" textLength="46.3" lengthAdjust="spacingAndGlyphs">Reflection</text>
<rect x="1206" y="452" width="7" height="7" rx="2" fill="#031a06"/><rect x="1207" y="453" width="5" height="5" rx="0.6" fill="#3cf46e"/>
<text x="1217.0" y="458.7" font-size="12" fill="#e6e2da" textLength="63.9" lengthAdjust="spacingAndGlyphs">Transparency</text>
<rect x="1206" y="468" width="7" height="7" rx="2" fill="#031a06"/><rect x="1207" y="469" width="5" height="5" rx="0.6" fill="#3cf46e"/>
<text x="1217.0" y="474.7" font-size="12" fill="#e6e2da" textLength="77.0" lengthAdjust="spacingAndGlyphs">Refraction Index</text>
<rect x="1206" y="484" width="7" height="7" rx="2" fill="#031a06"/><rect x="1207" y="485" width="5" height="5" rx="0.6" fill="#3cf46e"/>
<text x="1217.0" y="490.7" font-size="12" fill="#e6e2da" textLength="62.9" lengthAdjust="spacingAndGlyphs">Translucency</text>
<rect x="1206" y="500" width="7" height="7" rx="2" fill="#04042c"/><rect x="1207" y="501" width="5" height="5" rx="0.6" fill="#3f5cf8"/>
<text x="1217.0" y="506.7" font-size="12" fill="#e6e2da" textLength="31.8" lengthAdjust="spacingAndGlyphs">Normal</text>
<rect x="1206" y="516" width="7" height="7" rx="2" fill="#04042c"/><rect x="1207" y="517" width="5" height="5" rx="0.6" fill="#3f5cf8"/>
<text x="1217.0" y="522.7" font-size="12" fill="#e6e2da" textLength="25.3" lengthAdjust="spacingAndGlyphs">Bump</text>
<rect x="1206" y="532" width="7" height="7" rx="2" fill="#031a06"/><rect x="1207" y="533" width="5" height="5" rx="0.6" fill="#3cf46e"/>
<text x="1217.0" y="538.7" font-size="12" fill="#e6e2da" textLength="72.5" lengthAdjust="spacingAndGlyphs">Color Highlights</text>
<rect x="1206" y="548" width="7" height="7" rx="2" fill="#031a06"/><rect x="1207" y="549" width="5" height="5" rx="0.6" fill="#3cf46e"/>
<text x="1217.0" y="554.7" font-size="12" fill="#e6e2da" textLength="49.0" lengthAdjust="spacingAndGlyphs">Color Filter</text>
<rect x="1206" y="564" width="7" height="7" rx="2" fill="#031a06"/><rect x="1207" y="565" width="5" height="5" rx="0.6" fill="#3cf46e"/>
<text x="1217.0" y="570.7" font-size="12" fill="#e6e2da" textLength="84.5" lengthAdjust="spacingAndGlyphs">Diffuse Sharpness</text>
<rect x="1206" y="580" width="7" height="7" rx="2" fill="#031a06"/><rect x="1207" y="581" width="5" height="5" rx="0.6" fill="#3cf46e"/>
<text x="1217.0" y="586.7" font-size="12" fill="#e6e2da" textLength="63.5" lengthAdjust="spacingAndGlyphs">Bump Dropoff</text>
<rect x="1206" y="596" width="7" height="7" rx="2" fill="#031a06"/><rect x="1207" y="597" width="5" height="5" rx="0.6" fill="#3cf46e"/>
<text x="1217.0" y="602.7" font-size="12" fill="#e6e2da" textLength="105.5" lengthAdjust="spacingAndGlyphs">Additive Transparency</text>
<rect x="1206" y="612" width="7" height="7" rx="2" fill="#031a06"/><rect x="1207" y="613" width="5" height="5" rx="0.6" fill="#3cf46e"/>
<text x="1217.0" y="618.7" font-size="12" fill="#e6e2da" textLength="84.5" lengthAdjust="spacingAndGlyphs">Reflection Blurring</text>
<rect x="1206" y="628" width="7" height="7" rx="2" fill="#031a06"/><rect x="1207" y="629" width="5" height="5" rx="0.6" fill="#3cf46e"/>
<text x="1217.0" y="634.7" font-size="12" fill="#e6e2da" textLength="85.4" lengthAdjust="spacingAndGlyphs">Refraction Blurring</text>
<rect x="1206" y="644" width="7" height="7" rx="2" fill="#031a06"/><rect x="1207" y="645" width="5" height="5" rx="0.6" fill="#3cf46e"/>
<text x="1217.0" y="650.7" font-size="12" fill="#e6e2da" textLength="62.2" lengthAdjust="spacingAndGlyphs">Displacement</text>
<rect x="1206" y="660" width="7" height="7" rx="2" fill="#260602"/><rect x="1207" y="661" width="5" height="5" rx="0.6" fill="#ec5030"/>
<text x="1217.0" y="666.7" font-size="12" fill="#e6e2da" textLength="73.6" lengthAdjust="spacingAndGlyphs">Diffuse Shading</text>
<rect x="1206" y="676" width="7" height="7" rx="2" fill="#260602"/><rect x="1207" y="677" width="5" height="5" rx="0.6" fill="#ec5030"/>
<text x="1217.0" y="682.7" font-size="12" fill="#e6e2da" textLength="83.0" lengthAdjust="spacingAndGlyphs">Specular Shading</text>
<rect x="1206" y="692" width="7" height="7" rx="2" fill="#260602"/><rect x="1207" y="693" width="5" height="5" rx="0.6" fill="#ec5030"/>
<text x="1217.0" y="698.7" font-size="12" fill="#e6e2da" textLength="88.7" lengthAdjust="spacingAndGlyphs">Reflection Shading</text>
<rect x="1206" y="708" width="7" height="7" rx="2" fill="#260602"/><rect x="1207" y="709" width="5" height="5" rx="0.6" fill="#ec5030"/>
<text x="1217.0" y="714.7" font-size="12" fill="#e6e2da" textLength="89.6" lengthAdjust="spacingAndGlyphs">Refraction Shading</text>
<rect x="1206" y="724" width="7" height="7" rx="2" fill="#03222e"/><rect x="1207" y="725" width="5" height="5" rx="0.6" fill="#3fe6ff"/>
<text x="1217.0" y="730.7" font-size="12" fill="#e6e2da" textLength="35.5" lengthAdjust="spacingAndGlyphs">Material</text>
</g>
</svg>
</body></html>
